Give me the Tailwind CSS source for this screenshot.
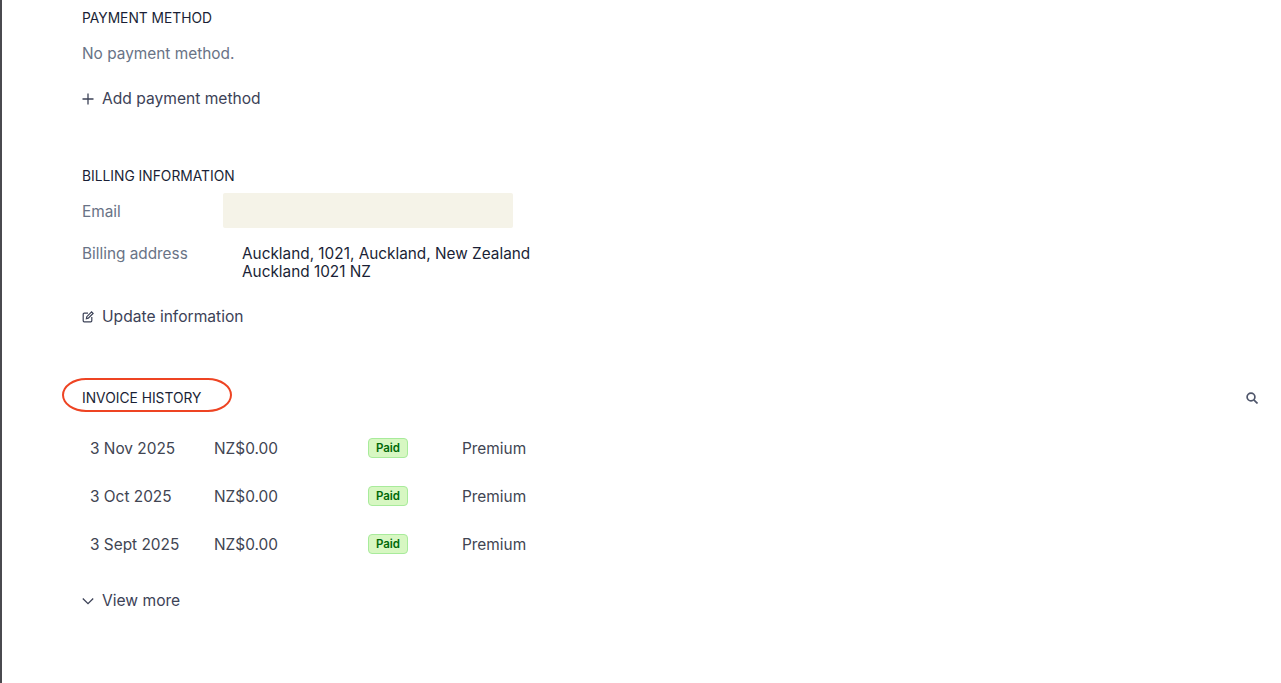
<!DOCTYPE html>
<html lang="en">
<head>
    <meta charset="UTF-8">
    <title>Billing</title>
    <script src="https://cdn.jsdelivr.net/npm/@tailwindcss/browser@4"></script>
</head>
<body class="bg-white overflow-hidden font-['Inter',sans-serif]">
    <div class="h-[683px] border-l-2 border-[#4a4a4f] pl-[80px] pr-[22px] flex flex-col">
        <!-- payment method -->
        <h2 class="mt-[10px] h-4 leading-4 text-[13.8px] font-[420] text-[#1a1f36] uppercase">Payment method</h2>
        <p class="mt-[16px] h-6 leading-6 text-[15.4px] text-[#697386]">No payment method.</p>
        <div class="mt-[21px] h-6 flex items-center text-[15.6px] font-[430] text-[#3c4257]">
            <svg class="w-3 h-3 mr-2" viewBox="0 0 12 12" fill="none" stroke="#3c4257" stroke-width="1.3"><path d="M6 .5v11M.5 6h11"/></svg>
            Add payment method
        </div>

        <!-- billing information -->
        <h2 class="mt-[57px] h-4 leading-4 text-[13.8px] font-[420] text-[#1a1f36] uppercase">Billing information</h2>
        <div class="mt-[9px] flex items-center h-[35px] text-[15.4px]">
            <span class="w-[141px] pt-[2px] text-[#697386]">Email</span>
            <div class="w-[290px] h-[35px] rounded-[2px] bg-[#f5f3e8]"></div>
        </div>
        <div class="mt-[17px] flex text-[15.35px] leading-[18px]">
            <span class="w-[160px] text-[#697386]">Billing address</span>
            <div class="text-[#1a1f36]">
                <p>Auckland, 1021, Auckland, New Zealand</p>
                <p>Auckland 1021 NZ</p>
            </div>
        </div>
        <div class="mt-[24px] h-6 flex items-center text-[15.6px] font-[430] text-[#3c4257]">
            <svg class="w-3 h-3 mr-2" viewBox="0 0 12 12" fill="none" stroke="#3c4257" stroke-width="1.2"><path d="M6 2.2H2.2a1 1 0 0 0-1 1v6.6a1 1 0 0 0 1 1h6.6a1 1 0 0 0 1-1V6"/><path d="M4.4 7.6l.4-1.9L9.6.9l1.5 1.5-4.8 4.8z"/></svg>
            Update information
        </div>

        <!-- invoice history -->
        <div class="mt-[61px] h-4 flex items-center justify-between relative">
            <h2 class="text-[13.8px] leading-4 font-[420] text-[#1a1f36] uppercase">Invoice history</h2>
            <div class="absolute left-[-20px] top-[-12px] w-[170px] h-[34px] rounded-[24px/17px] border-2 border-[#ee4423]"></div>
            <svg class="w-3 h-3 mr-px" viewBox="0 0 12 12" fill="none" stroke="#4f566b" stroke-width="1.7"><circle cx="5" cy="5" r="3.9"/><path d="M7.8 7.8L11.5 11.5"/></svg>
        </div>

        <div class="mt-[19px] text-[15.4px] text-[#414552]">
            <div class="h-12 flex items-center">
                <span class="w-[132px] pl-2">3 Nov 2025</span>
                <span class="w-[154px]">NZ$0.00</span>
                <span class="w-[94px] flex -mt-[2px]"><span class="w-[40px] h-5 leading-[18px] text-center rounded-[4px] border border-[#a8eb9b] bg-[#d7f7c2] text-[11.5px] font-semibold text-[#006908]">Paid</span></span>
                <span>Premium</span>
            </div>
            <div class="h-12 flex items-center">
                <span class="w-[132px] pl-2">3 Oct 2025</span>
                <span class="w-[154px]">NZ$0.00</span>
                <span class="w-[94px] flex -mt-[2px]"><span class="w-[40px] h-5 leading-[18px] text-center rounded-[4px] border border-[#a8eb9b] bg-[#d7f7c2] text-[11.5px] font-semibold text-[#006908]">Paid</span></span>
                <span>Premium</span>
            </div>
            <div class="h-12 flex items-center">
                <span class="w-[132px] pl-2">3 Sept 2025</span>
                <span class="w-[154px]">NZ$0.00</span>
                <span class="w-[94px] flex -mt-[2px]"><span class="w-[40px] h-5 leading-[18px] text-center rounded-[4px] border border-[#a8eb9b] bg-[#d7f7c2] text-[11.5px] font-semibold text-[#006908]">Paid</span></span>
                <span>Premium</span>
            </div>
        </div>

        <div class="mt-[20px] h-6 flex items-center text-[15.6px] font-[430] text-[#3c4257]">
            <svg class="w-3 h-3 mr-2" viewBox="0 0 12 12" fill="none" stroke="#3c4257" stroke-width="1.3"><path d="M.8 3.5L6 8.7l5.2-5.2"/></svg>
            View more
        </div>
    </div>
</body>
</html>
